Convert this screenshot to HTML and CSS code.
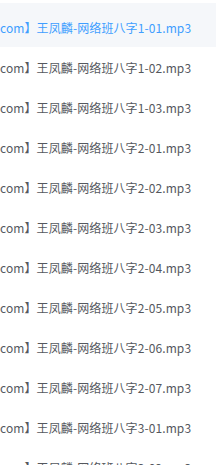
FILE: index.html
```html
<!DOCTYPE html>
<html lang="zh-CN">
<head>
    <meta charset="UTF-8">
    <meta name="viewport" content="width=device-width, initial-scale=1.0">
    <title>文件列表</title>
    <link rel="stylesheet" href="styles.css">
</head>
<body>

    <ul class="file-list">
        <li class="file active"><span class="name">com】王凤麟-网络班八字1-01.mp3</span></li>
        <li class="file"><span class="name">com】王凤麟-网络班八字1-02.mp3</span></li>
        <li class="file"><span class="name">com】王凤麟-网络班八字1-03.mp3</span></li>
        <li class="file"><span class="name">com】王凤麟-网络班八字2-01.mp3</span></li>
        <li class="file"><span class="name">com】王凤麟-网络班八字2-02.mp3</span></li>
        <li class="file"><span class="name">com】王凤麟-网络班八字2-03.mp3</span></li>
        <li class="file"><span class="name">com】王凤麟-网络班八字2-04.mp3</span></li>
        <li class="file"><span class="name">com】王凤麟-网络班八字2-05.mp3</span></li>
        <li class="file"><span class="name">com】王凤麟-网络班八字2-06.mp3</span></li>
        <li class="file"><span class="name">com】王凤麟-网络班八字2-07.mp3</span></li>
        <li class="file"><span class="name">com】王凤麟-网络班八字3-01.mp3</span></li>
        <li class="file"><span class="name">com】王凤麟-网络班八字3-02.mp3</span></li>
    </ul>

</body>
</html>
```

FILE: styles.css
```css
body {
    margin: 0;
    background: #fff;
    font-family: "Noto Sans CJK SC", "Noto Sans", sans-serif;
    color: #55585e;
    overflow: hidden;
}
.file-list {
    list-style: none;
    margin: 0;
    padding: 3px 0 0 0;
}
.file {
    display: flex;
    align-items: center;
    height: 40px;
    font-size: 12px;
    letter-spacing: 0.1px;
    white-space: nowrap;
}
.file.active {
    height: 44px;
    box-sizing: border-box;
    padding-top: 4px;
    background: #f5f7fa;
    color: #409eff;
}
```
